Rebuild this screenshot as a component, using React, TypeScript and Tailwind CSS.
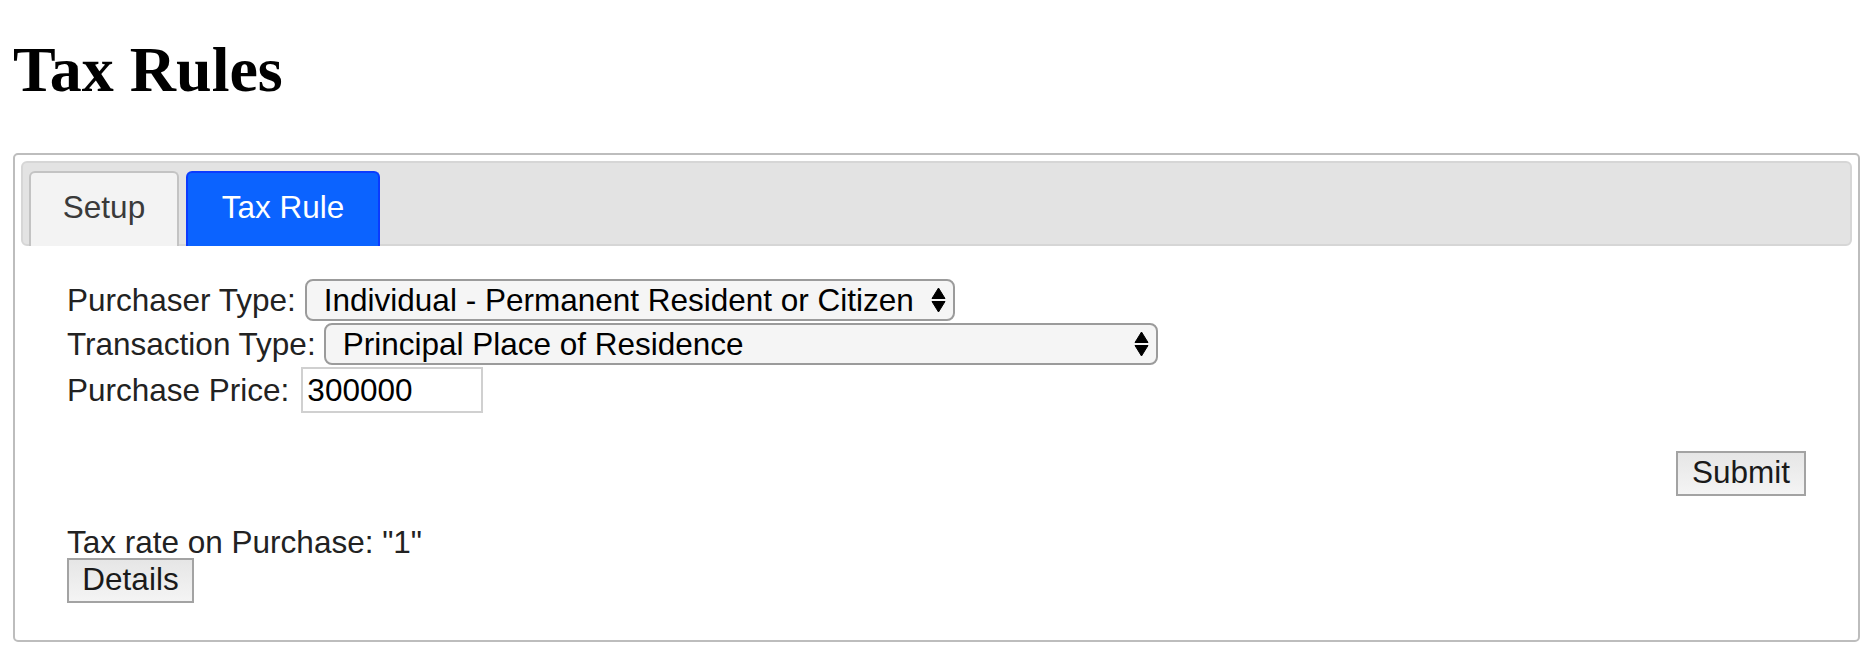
const PURCHASER_TYPES = ['Individual - Permanent Resident or Citizen', 'Individual - Foreign', 'Company', 'Trust'];
const TRANSACTION_TYPES = ['Principal Place of Residence', 'Investment Property', 'Vacant Land'];

function SelectArrows() {
  return (
    <svg className="pointer-events-none absolute right-[9px] top-1/2 -translate-y-1/2" width="15" height="26" viewBox="0 0 15 26">
      <path d="M7.5 1 L14 11.5 L1 11.5 Z" fill="#000" strokeLinejoin="round" stroke="#000" strokeWidth="1" />
      <path d="M1 14.5 L14 14.5 L7.5 25 Z" fill="#000" strokeLinejoin="round" stroke="#000" strokeWidth="1" />
    </svg>
  );
}

function Dropdown({ options, width }: { options: string[]; width: string }) {
  return (
    <div className={`relative h-[42px] ${width}`}>
      <select
        defaultValue={options[0]}
        className="h-full w-full appearance-none rounded-[8px] border-2 border-[#9b9b9b] bg-[#f5f5f5] pl-[17px] pr-[30px] text-black leading-[36px] outline-none"
      >
        {options.map((o) => (
          <option key={o}>{o}</option>
        ))}
      </select>
      <SelectArrows />
    </div>
  );
}

export default function App() {
  return (
    <div className="min-h-screen bg-white pt-[38px] font-['Liberation_Sans',Arial,sans-serif] text-[31.5px] leading-[36px] text-[#222]">
      <h1 className="ml-[13px] font-['Liberation_Serif','Times_New_Roman',serif] text-[64px] font-bold leading-[64px] text-black">
        Tax Rules
      </h1>

      <div className="ml-[13px] mt-[51px] w-[1847px] rounded-[5px] border-2 border-[#bdbdbd] p-[6px]">
        {/* Tabs */}
        <div className="flex gap-[7px] rounded-[6px] border-2 border-[#d6d6d6] bg-[#e3e3e3] pl-[6px] pt-[8px]">
          <button className="-mb-[2px] h-[75px] w-[150px] rounded-t-[6px] border-2 border-b-0 border-[#c3c3c3] bg-[#f3f3f3] pb-[5px] text-center text-[#3a3a3a] leading-[36px]">
            Setup
          </button>
          <button className="-mb-[2px] h-[75px] w-[194px] rounded-t-[6px] border-2 border-b-0 border-[#0a3bff] bg-[#0b63ff] pb-[5px] text-center text-white leading-[36px]">
            Tax Rule
          </button>
        </div>

        {/* Panel */}
        <div className="px-[46px] pb-[31px] pt-[33px]">
          <div className="flex flex-col gap-[2px]">
            <div className="flex h-[42px] items-center gap-[9px]">
              <span>Purchaser Type:</span>
              <Dropdown options={PURCHASER_TYPES} width="w-[650px]" />
            </div>
            <div className="flex h-[42px] items-center gap-[8px]">
              <span>Transaction Type:</span>
              <Dropdown options={TRANSACTION_TYPES} width="w-[834px]" />
            </div>
            <div className="flex h-[46px] items-center gap-[12px]">
              <span>Purchase Price:</span>
              <input
                type="text"
                defaultValue="300000"
                className="h-[46px] w-[182px] border-2 border-[#d0d0d0] bg-white pl-[4px] text-black leading-[36px] outline-none"
              />
            </div>
          </div>

          <div className="mt-[38px] flex justify-end">
            <button className="h-[45px] w-[130px] border-2 border-[#a3a3a3] bg-gradient-to-b from-[#e6e6e6] to-[#f4f4f4] pb-[4px] text-center leading-[36px] text-[#1a1a1a]">
              Submit
            </button>
          </div>

          <p className="mt-[28px]">Tax rate on Purchase: "1"</p>
          <button className="-mt-[2px] block h-[45px] w-[127px] border-2 border-[#a3a3a3] bg-gradient-to-b from-[#e6e6e6] to-[#f4f4f4] pb-[4px] text-center leading-[36px] text-[#1a1a1a]">
            Details
          </button>
        </div>
      </div>
    </div>
  );
}
